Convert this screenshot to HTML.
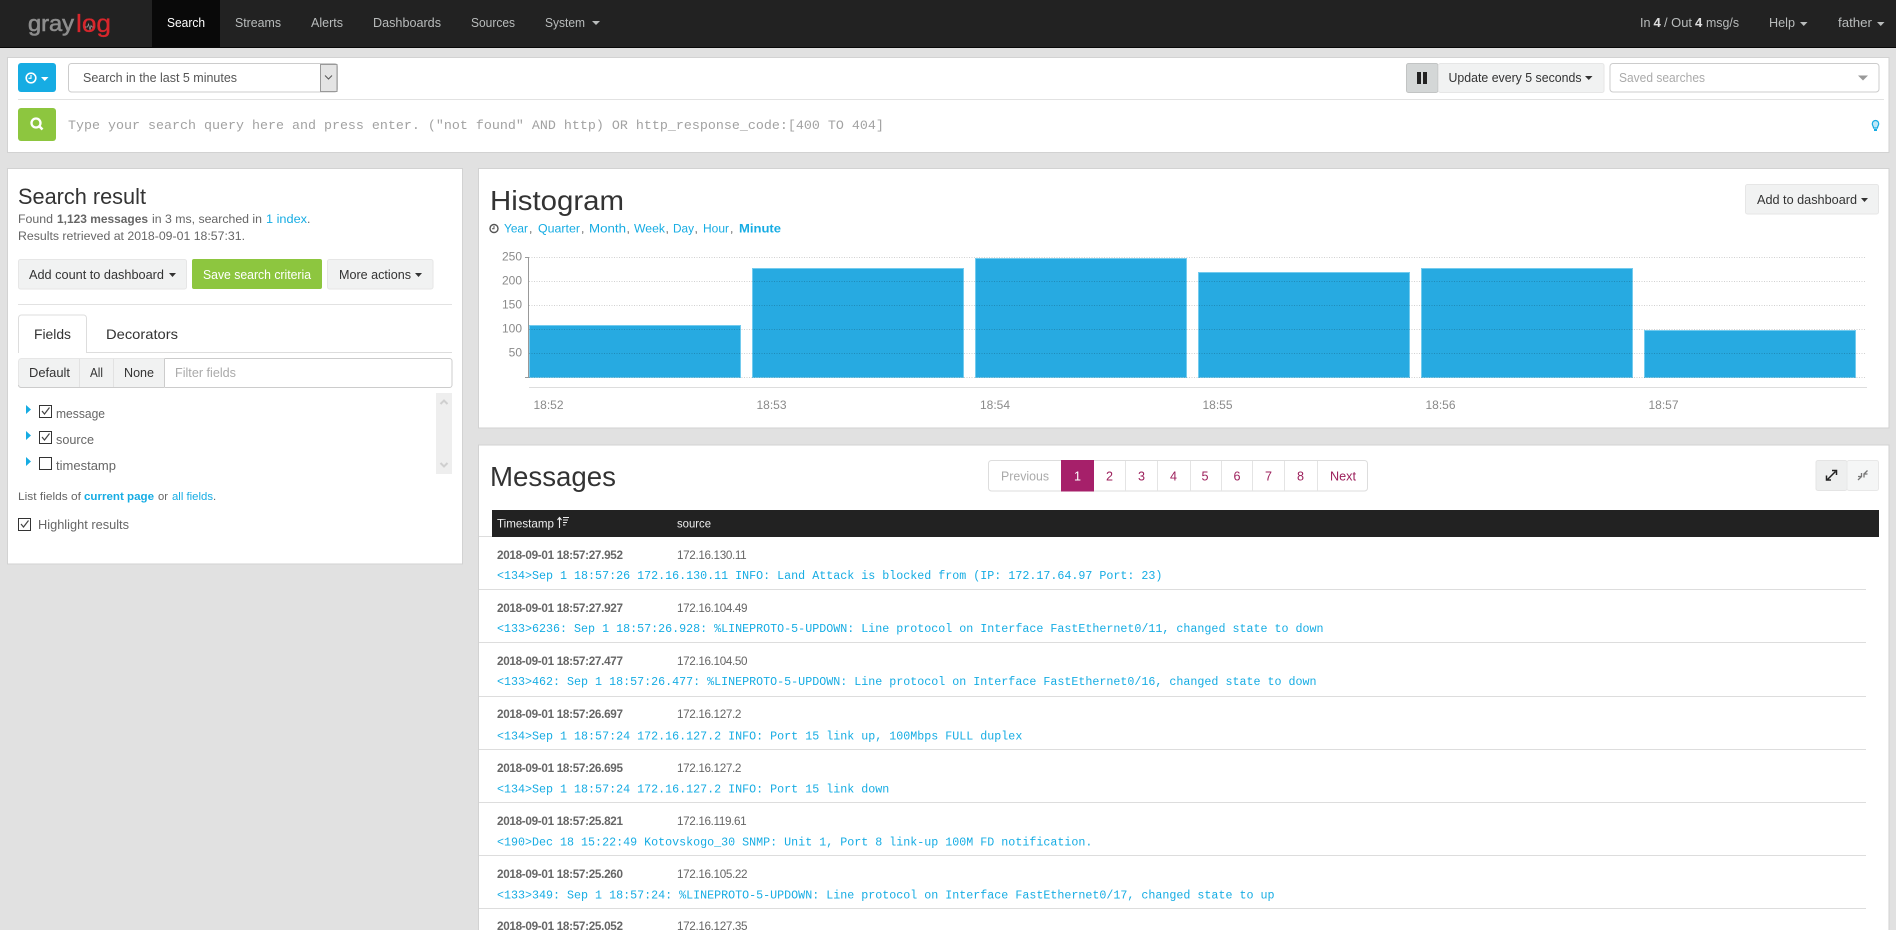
<!DOCTYPE html>
<html lang="en"><head><meta charset="utf-8"><title>Graylog - Search</title>
<style>
html,body{margin:0;padding:0;width:1896px;height:930px;overflow:hidden;background:#e1e1e1}
svg{display:block}
text{font-family:"Liberation Sans",sans-serif;font-size:13px;fill:#333}
.nav{fill:#b9bcbc;font-size:13.2px}
.m{fill:#666}.l{fill:#16ace3}.b{font-weight:bold}
.s{font-size:12.2px}
.mono{font-family:"Liberation Mono",monospace}
.msg{font-family:"Liberation Mono",monospace;font-size:11.68px;fill:#16ace3}
.ts{font-size:11.7px;font-weight:bold;fill:#666;letter-spacing:-.3px}
.ip{font-size:11.7px;fill:#666;letter-spacing:-.35px}
.ax{font-size:12px;fill:#8a8a8a}
.pg{font-size:12.6px;fill:#9c1f5b}
.box{fill:#fff;stroke:#d2d2d2}
.btn{fill:#f1f2f2;stroke:#e6e6e6}
.rule{stroke:#e2e2e2;stroke-width:1}
.grid{stroke:#000;stroke-opacity:.18;stroke-dasharray:1 1.5}
.cb{fill:#fff;stroke:#333;stroke-width:1}
.ck{fill:none;stroke:#444;stroke-width:1.2}
</style></head><body>
<svg xmlns="http://www.w3.org/2000/svg" width="1896" height="930" viewBox="0 0 1896 930">
<rect width="1896" height="930" fill="#e1e1e1"/>

<!-- navbar -->
<rect width="1896" height="47" fill="#222"/><rect y="47" width="1896" height="1" fill="#080808"/>
<rect x="152" width="68" height="47" fill="#090909"/>
<text x="28" y="31" textLength="46" lengthAdjust="spacingAndGlyphs" style="font-size:22px;fill:#8d8d8d;stroke:#8d8d8d;stroke-width:.6">gray</text>
<text x="76" y="32" textLength="35" lengthAdjust="spacingAndGlyphs" style="font-size:25px;fill:#d8262c;stroke:#d8262c;stroke-width:.3">log</text>
<path d="M85 27h2.500l1-3 1.500 6 1-4.500 1 1.500h1.500" fill="none" stroke="#9a9a9a" stroke-width=".7"/>
<text x="167" y="27" textLength="38" lengthAdjust="spacingAndGlyphs" class="nav" style="fill:#fff">Search</text>
<text x="235" y="27" textLength="46" lengthAdjust="spacingAndGlyphs" class="nav">Streams</text>
<text x="311" y="27" textLength="32" lengthAdjust="spacingAndGlyphs" class="nav">Alerts</text>
<text x="373" y="27" textLength="68" lengthAdjust="spacingAndGlyphs" class="nav">Dashboards</text>
<text x="471" y="27" textLength="44" lengthAdjust="spacingAndGlyphs" class="nav">Sources</text>
<text x="545" y="27" textLength="40" lengthAdjust="spacingAndGlyphs" class="nav">System</text>
<path d="M592 21h8l-4 4z" fill="#b9bcbc"/>
<text x="1640" y="27" class="nav" textLength="10.500" lengthAdjust="spacingAndGlyphs">In</text>
<text x="1653.500" y="27" class="nav b" style="fill:#ddd">4</text>
<text x="1664" y="27" class="nav" textLength="28" lengthAdjust="spacingAndGlyphs">/ Out</text>
<text x="1695" y="27" class="nav b" style="fill:#ddd">4</text>
<text x="1706" y="27" class="nav" textLength="33" lengthAdjust="spacingAndGlyphs">msg/s</text>
<text x="1769" y="27" class="nav" textLength="26" lengthAdjust="spacingAndGlyphs">Help</text>
<path d="M1800 22h7.500l-3.750 4z" fill="#b9bcbc"/>
<text x="1838" y="27" class="nav" textLength="34" lengthAdjust="spacingAndGlyphs">father</text>
<path d="M1877 22h7.500l-3.750 4z" fill="#b9bcbc"/>

<!-- search bar panel -->
<rect class="box" x="7.500" y="57.500" width="1881.500" height="95"/>
<rect x="18" y="63" width="38" height="29" rx="3" fill="#16ace3"/>
<circle cx="31" cy="78" r="4.800" fill="none" stroke="#fff" stroke-width="1.600"/><path d="M31 75v3.300h-2.500" fill="none" stroke="#fff" stroke-width="1.100"/>
<path d="M41 77h7.500l-3.750 4z" fill="#fff"/>
<rect x="68.500" y="63.500" width="269" height="28.500" rx="3" fill="#fff" stroke="#ccc"/>
<rect x="320.500" y="64.500" width="16.500" height="27" fill="#e4e4e4" stroke="#999"/>
<path d="M325 75.500l3.500 3.500 3.500-3.500" fill="none" stroke="#555" stroke-width="1"/>
<text x="83" y="82" textLength="154" lengthAdjust="spacingAndGlyphs" style="fill:#555">Search in the last 5 minutes</text>
<rect x="1406.500" y="63.500" width="31.500" height="29" fill="#d4d7d7" stroke="#c2c4c4" rx="2"/>
<rect x="1417" y="72" width="4" height="12" fill="#222"/><rect x="1423" y="72" width="4" height="12" fill="#222"/>
<rect class="btn" x="1438.500" y="63.500" width="165.500" height="29" rx="2"/>
<text x="1448.500" y="82" textLength="133" lengthAdjust="spacingAndGlyphs">Update every 5 seconds</text>
<path d="M1585 76h7.500l-3.750 4z" fill="#333"/>
<rect x="1610" y="63.500" width="269" height="28.500" rx="3" fill="#fff" stroke="#ccc"/>
<text x="1619" y="82" textLength="86" lengthAdjust="spacingAndGlyphs" style="fill:#aaa">Saved searches</text>
<path d="M1858 75.500h10l-5 5z" fill="#999"/>
<line class="rule" x1="18" x2="1884" y1="99.500" y2="99.500"/>
<rect x="18" y="108" width="38" height="33" rx="3" fill="#8dc63f"/>
<circle cx="36" cy="123" r="4.500" fill="none" stroke="#fff" stroke-width="2.300"/><path d="M39.500 126.500l3 3" stroke="#fff" stroke-width="2.600"/>
<text x="68" y="129" class="mono" style="font-size:13.33px;fill:#a2a2a2">Type your search query here and press enter. ("not found" AND http) OR http_response_code:[400 TO 404]</text>
<path d="M1875.500 120.500a3.200 3.200 0 0 1 3.200 3.200c0 1.500-1 2.300-1.300 4.300h-3.800c-.3-2-1.300-2.800-1.300-4.300a3.200 3.200 0 0 1 3.200-3.200z" fill="#bfe8f8" stroke="#16ace3" stroke-width="1.200"/><path d="M1874 129h3v2h-3z" fill="#16ace3"/>

<!-- left panel -->
<rect class="box" x="7.500" y="168.500" width="455" height="395.500"/>
<text x="18" y="204" textLength="128" lengthAdjust="spacingAndGlyphs" style="font-size:22px">Search result</text>
<text x="18" y="223" class="m s" textLength="35" lengthAdjust="spacingAndGlyphs">Found</text>
<text x="57" y="223" class="m s b" textLength="91" lengthAdjust="spacingAndGlyphs">1,123 messages</text>
<text x="152" y="223" class="m s" textLength="110" lengthAdjust="spacingAndGlyphs">in 3 ms, searched in</text>
<text x="266" y="223" class="l s" textLength="41" lengthAdjust="spacingAndGlyphs">1 index</text>
<text x="307" y="223" class="m s">.</text>
<text x="18" y="240" class="m s" textLength="227" lengthAdjust="spacingAndGlyphs">Results retrieved at 2018-09-01 18:57:31.</text>
<rect class="btn" x="18.500" y="259.500" width="168" height="29.500" rx="2"/>
<text x="29" y="279" textLength="135" lengthAdjust="spacingAndGlyphs">Add count to dashboard</text>
<path d="M169 273h7l-3.500 4z" fill="#333"/>
<rect x="192" y="259" width="130" height="30" rx="2" fill="#8dc63f"/>
<text x="203" y="279" textLength="108" lengthAdjust="spacingAndGlyphs" style="fill:#fff">Save search criteria</text>
<rect class="btn" x="327.500" y="259.500" width="105.500" height="29.500" rx="2"/>
<text x="339" y="279" textLength="72" lengthAdjust="spacingAndGlyphs">More actions</text>
<path d="M415 273h7l-3.500 4z" fill="#333"/>
<line class="rule" x1="18" x2="452" y1="304.500" y2="304.500"/>
<line class="rule" x1="18" x2="452" y1="352.500" y2="352.500" style="stroke:#ddd"/>
<path d="M18.500 353v-35a3 3 0 0 1 3-3h62a3 3 0 0 1 3 3v35" fill="#fff" stroke="#ddd"/>
<rect x="19" y="350" width="67" height="4" fill="#fff"/>
<text x="34" y="339" textLength="37" lengthAdjust="spacingAndGlyphs" style="font-size:14px">Fields</text>
<text x="106" y="339" textLength="72" lengthAdjust="spacingAndGlyphs" style="font-size:14px">Decorators</text>
<path d="M164.500 358.500h285a2.500 2.500 0 0 1 2.500 2.500v24a2.500 2.500 0 0 1-2.500 2.500h-285z" fill="#fff" stroke="#ccc"/>
<path d="M164.500 358.500h-143a3 3 0 0 0-3 3v23a3 3 0 0 0 3 3h143z" fill="#f1f2f2" stroke="#e6e6e6"/>
<path d="M18.500 385a2.500 2.500 0 0 0 2.500 2.500h143" fill="none" stroke="#ccc"/>
<path d="M164.500 358.500v29" stroke="#ccc"/>
<path d="M79.500 359v28M113.500 359v28" stroke="#e2e2e2"/>
<text x="29" y="377" textLength="41" lengthAdjust="spacingAndGlyphs">Default</text>
<text x="90" y="377" textLength="13" lengthAdjust="spacingAndGlyphs">All</text>
<text x="124" y="377" textLength="30" lengthAdjust="spacingAndGlyphs">None</text>
<text x="175" y="377" textLength="61" lengthAdjust="spacingAndGlyphs" style="fill:#aaa">Filter fields</text>
<path d="M26 405l5 4.500-5 4.500zM26 431l5 4.500-5 4.500zM26 457l5 4.500-5 4.500z" fill="#16ace3"/>
<rect class="cb" x="39.500" y="405.500" width="12" height="12"/><path class="ck" d="M42 411l2.500 3 5-6.500"/>
<rect class="cb" x="39.500" y="431.500" width="12" height="12"/><path class="ck" d="M42 437l2.500 3 5-6.500"/>
<rect class="cb" x="39.500" y="457.500" width="12" height="12"/>
<text x="56" y="418" class="m" textLength="49" lengthAdjust="spacingAndGlyphs">message</text>
<text x="56" y="444" class="m" textLength="38" lengthAdjust="spacingAndGlyphs">source</text>
<text x="56" y="470" class="m" textLength="60" lengthAdjust="spacingAndGlyphs">timestamp</text>
<rect x="436" y="393" width="16" height="81" fill="#eee"/>
<path d="M440.500 404l3.500-3.500 3.500 3.500" fill="none" stroke="#cfcfcf" stroke-width="2"/><path d="M440.500 463l3.500 3.500 3.500-3.500" fill="none" stroke="#cfcfcf" stroke-width="2"/>
<text x="18" y="500" class="m" style="font-size:11.400px" textLength="63" lengthAdjust="spacingAndGlyphs">List fields of</text>
<text x="84" y="500" class="l b" style="font-size:11.400px" textLength="70" lengthAdjust="spacingAndGlyphs">current page</text>
<text x="158" y="500" class="m" style="font-size:11.400px" textLength="10" lengthAdjust="spacingAndGlyphs">or</text>
<text x="172" y="500" class="l" style="font-size:11.400px" textLength="41" lengthAdjust="spacingAndGlyphs">all fields</text>
<text x="213" y="500" class="m" style="font-size:11.400px">.</text>
<rect class="cb" x="18.500" y="518.500" width="12" height="12"/><path class="ck" d="M21 524l2.500 3 5-6.500"/>
<text x="38" y="529" class="m" textLength="91" lengthAdjust="spacingAndGlyphs">Highlight results</text>

<!-- histogram panel -->
<rect class="box" x="478.500" y="168.500" width="1410.500" height="259.500"/>
<text x="490" y="210" textLength="134" lengthAdjust="spacingAndGlyphs" style="font-size:28px">Histogram</text>
<circle cx="494" cy="228.500" r="4" fill="none" stroke="#555" stroke-width="1.400"/><path d="M494 226v2.700h-2" fill="none" stroke="#555"/>
<text x="504" y="232.500" class="l s" textLength="24" lengthAdjust="spacingAndGlyphs">Year</text><text x="529" y="232.500" class="m s">,</text>
<text x="538" y="232.500" class="l s" textLength="42" lengthAdjust="spacingAndGlyphs">Quarter</text><text x="581" y="232.500" class="m s">,</text>
<text x="589" y="232.500" class="l s" textLength="37" lengthAdjust="spacingAndGlyphs">Month</text><text x="626.500" y="232.500" class="m s">,</text>
<text x="634" y="232.500" class="l s" textLength="31" lengthAdjust="spacingAndGlyphs">Week</text><text x="665.500" y="232.500" class="m s">,</text>
<text x="673" y="232.500" class="l s" textLength="21" lengthAdjust="spacingAndGlyphs">Day</text><text x="694.500" y="232.500" class="m s">,</text>
<text x="703" y="232.500" class="l s" textLength="26" lengthAdjust="spacingAndGlyphs">Hour</text><text x="730" y="232.500" class="m s">,</text>
<text x="739" y="232.500" class="l s b" textLength="42" lengthAdjust="spacingAndGlyphs">Minute</text>
<g fill="#27aae1" stroke="#73cbee" stroke-width="1">
<rect x="529.500" y="325.500" width="211" height="52"/>
<rect x="752.500" y="268.500" width="211" height="109"/>
<rect x="975.500" y="258.500" width="211" height="119"/>
<rect x="1198.500" y="272.500" width="211" height="105"/>
<rect x="1421.500" y="268.500" width="211" height="109"/>
<rect x="1644.500" y="330.500" width="211" height="47"/>
</g>
<g class="grid"><path d="M529 257.500h1337M529 281.500h1337M529 305.500h1337M529 329.500h1337M529 353.500h1337M529 377.500h1337"/></g>
<path d="M528.500 257v121" stroke="#999" stroke-width="1"/><path d="M525 257.500h3M525 377.500h3" stroke="#999"/>
<line x1="529" x2="1867" y1="387.500" y2="387.500" stroke="#ddd"/>
<g class="ax" text-anchor="end">
<text class="ax" x="522" y="260.500">250</text><text class="ax" x="522" y="284.500">200</text><text class="ax" x="522" y="308.500">150</text><text class="ax" x="522" y="332.500">100</text><text class="ax" x="522" y="356.500">50</text>
</g>
<text class="ax" x="533.500" y="409">18:52</text><text class="ax" x="756.500" y="409">18:53</text><text class="ax" x="980" y="409">18:54</text><text class="ax" x="1202.500" y="409">18:55</text><text class="ax" x="1425.500" y="409">18:56</text><text class="ax" x="1648.500" y="409">18:57</text>
<rect class="btn" x="1745.500" y="184.500" width="133" height="29.500" rx="2"/>
<text x="1757" y="204" textLength="100" lengthAdjust="spacingAndGlyphs">Add to dashboard</text>
<path d="M1861 198h7l-3.500 4z" fill="#333"/>

<!-- messages panel -->
<rect class="box" x="478.500" y="445" width="1410.500" height="490"/>
<text x="490" y="486" textLength="126" lengthAdjust="spacingAndGlyphs" style="font-size:28px">Messages</text>
<rect x="988.500" y="460.500" width="379" height="30.500" rx="3" fill="#fff" stroke="#ddd"/>
<rect x="1061" y="460" width="33" height="31.500" fill="#a6206a"/>
<path d="M1125.500 461v30M1157.500 461v30M1190.500 461v30M1221.500 461v30M1252.500 461v30M1284.500 461v30M1317.500 461v30" stroke="#e4e4e4"/>
<text x="1001" y="480.500" class="pg" textLength="48" lengthAdjust="spacingAndGlyphs" style="fill:#aaa">Previous</text>
<g text-anchor="middle"><text class="pg" x="1077.500" y="480.500" style="fill:#fff">1</text><text class="pg" x="1109.500" y="480.500">2</text><text class="pg" x="1141.500" y="480.500">3</text><text class="pg" x="1173.500" y="480.500">4</text><text class="pg" x="1205" y="480.500">5</text><text class="pg" x="1237" y="480.500">6</text><text class="pg" x="1268.500" y="480.500">7</text><text class="pg" x="1300.500" y="480.500">8</text></g>
<text x="1330" y="480.500" class="pg" textLength="26" lengthAdjust="spacingAndGlyphs">Next</text>
<rect x="1816" y="460.500" width="31" height="30" rx="2" fill="#eeefef" stroke="#e4e4e4"/>
<rect x="1847" y="460.500" width="31.500" height="30" rx="2" fill="#f5f6f6" stroke="#e8e8e8"/>
<path d="M1827.500 479.500l8-8M1832 470.500h4.500v4.500M1831 480h-4.500v-4.500" fill="none" stroke="#222" stroke-width="1.500"/>
<path d="M1858 480l3.500-3.500M1864 474l3.500-3.500M1861.500 473v3.500h-3.500M1864 477.500v-3.500h3.500" fill="none" stroke="#777" stroke-width="1.300"/>

<line x1="479" x2="1866" y1="536.500" y2="536.500" stroke="#ddd"/>
<rect x="492" y="510" width="1387" height="27" fill="#222"/>
<text x="497" y="527.500" style="font-size:11.700px;fill:#eee" textLength="57" lengthAdjust="spacingAndGlyphs">Timestamp</text>
<text x="677" y="527.500" style="font-size:11.700px;fill:#eee" textLength="34" lengthAdjust="spacingAndGlyphs">source</text>
<path d="M559.500 528v-10M557.500 520l2-2.500 2 2.500M563 517.500h6M563 520h5M563 522.500h4M563 525h2.500" fill="none" stroke="#eee" stroke-width="1.100"/>

<g class="rule"><path d="M479 589.500h1387M479 642.500h1387M479 696.500h1387M479 749.500h1387M479 802.500h1387M479 855.500h1387M479 908.500h1387" stroke="#ddd"/></g>
<text x="497" y="559" class="ts">2018-09-01 18:57:27.952</text><text x="677" y="559" class="ip">172.16.130.11</text>
<text x="497" y="579" class="msg">&lt;134&gt;Sep 1 18:57:26 172.16.130.11 INFO: Land Attack is blocked from (IP: 172.17.64.97 Port: 23)</text>
<text x="497" y="612" class="ts">2018-09-01 18:57:27.927</text><text x="677" y="612" class="ip">172.16.104.49</text>
<text x="497" y="632" class="msg">&lt;133&gt;6236: Sep 1 18:57:26.928: %LINEPROTO-5-UPDOWN: Line protocol on Interface FastEthernet0/11, changed state to down</text>
<text x="497" y="665" class="ts">2018-09-01 18:57:27.477</text><text x="677" y="665" class="ip">172.16.104.50</text>
<text x="497" y="685" class="msg">&lt;133&gt;462: Sep 1 18:57:26.477: %LINEPROTO-5-UPDOWN: Line protocol on Interface FastEthernet0/16, changed state to down</text>
<text x="497" y="718" class="ts">2018-09-01 18:57:26.697</text><text x="677" y="718" class="ip">172.16.127.2</text>
<text x="497" y="739.500" class="msg">&lt;134&gt;Sep 1 18:57:24 172.16.127.2 INFO: Port 15 link up, 100Mbps FULL duplex</text>
<text x="497" y="772" class="ts">2018-09-01 18:57:26.695</text><text x="677" y="772" class="ip">172.16.127.2</text>
<text x="497" y="792.500" class="msg">&lt;134&gt;Sep 1 18:57:24 172.16.127.2 INFO: Port 15 link down</text>
<text x="497" y="825" class="ts">2018-09-01 18:57:25.821</text><text x="677" y="825" class="ip">172.16.119.61</text>
<text x="497" y="845.500" class="msg">&lt;190&gt;Dec 18 15:22:49 Kotovskogo_30 SNMP: Unit 1, Port 8 link-up 100M FD notification.</text>
<text x="497" y="878" class="ts">2018-09-01 18:57:25.260</text><text x="677" y="878" class="ip">172.16.105.22</text>
<text x="497" y="898.500" class="msg">&lt;133&gt;349: Sep 1 18:57:24: %LINEPROTO-5-UPDOWN: Line protocol on Interface FastEthernet0/17, changed state to up</text>
<text x="497" y="930" class="ts">2018-09-01 18:57:25.052</text><text x="677" y="930" class="ip">172.16.127.35</text>
</svg>
</body></html>
